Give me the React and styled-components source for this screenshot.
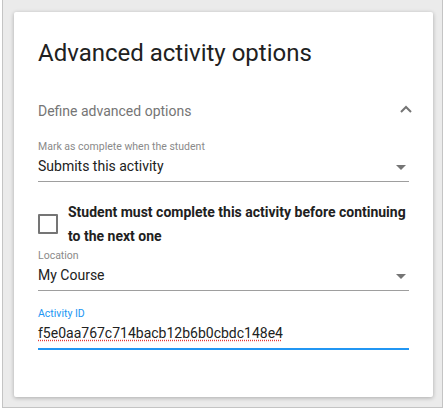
import React from "react";
import styled, { createGlobalStyle } from "styled-components";

const Global = createGlobalStyle`
  html, body {
    margin: 0;
    background: #fff;
    font-family: Roboto, "Liberation Sans", sans-serif;
  }
`;

function App() {
  return (
    <>
      <Global />
      <Frame>
        <Card>
          <Title>Advanced activity options</Title>
          <SectionHeader>
            <SectionTitle>Define advanced options</SectionTitle>
            <Chevron viewBox="0 0 12 8">
              <path d="M1 7 L6 2 L11 7" fill="none" stroke="#757575" strokeWidth="2" />
            </Chevron>
          </SectionHeader>

          <Field>
            <Label>Mark as complete when the student</Label>
            <SelectRow>
              <Value>Submits this activity</Value>
              <Caret />
            </SelectRow>
          </Field>

          <CheckRow>
            <Box />
            <CheckText>
              Student must complete this activity before continuing to the next one
            </CheckText>
          </CheckRow>

          <Field $top={2}>
            <Label>Location</Label>
            <SelectRow>
              <Value>My Course</Value>
              <Caret />
            </SelectRow>
          </Field>

          <Field $top={17}>
            <Label $focused>Activity ID</Label>
            <SelectRow $focused>
              <Value>
                <Misspelled>f5e0aa767c714bacb12b6b0cbdc148e4</Misspelled>
              </Value>
            </SelectRow>
          </Field>
        </Card>
      </Frame>
    </>
  );
}

export default App;

const Frame = styled.div`
  margin: 0 2px 3px 2px;
  padding: 12px 9px 10px 11px;
  background: #ebebeb;
  border: 1px solid #c4c4c4;
  border-top: none;
`;

const Card = styled.div`
  background: #fff;
  height: 385px;
  box-sizing: border-box;
  padding: 23px 24px 0 24px;
  box-shadow: 0 1px 4px rgba(0, 0, 0, 0.28);
  border-radius: 2px;
`;

const Title = styled.h1`
  margin: 0;
  font-size: 24px;
  font-weight: 400;
  line-height: 36px;
  color: #212121;
`;

const SectionHeader = styled.div`
  display: flex;
  align-items: center;
  justify-content: space-between;
  margin-top: 28px;
  height: 24px;
`;

const SectionTitle = styled.span`
  font-size: 14px;
  color: #757575;
`;

const Chevron = styled.svg`
  width: 12px;
  height: 8px;
  margin-right: -3px;
  margin-top: -4px;
`;

const Field = styled.div`
  margin-top: ${(p) => (p.$top ?? 18)}px;
`;

const Label = styled.div`
  font-size: 10.5px;
  line-height: 12px;
  color: ${(p) => (p.$focused ? "#2196f3" : "#8a8a8a")};
`;

const SelectRow = styled.div`
  display: flex;
  align-items: center;
  justify-content: space-between;
  height: 26px;
  padding-bottom: 2px;
  border-bottom: ${(p) => (p.$focused ? "2px solid #2196f3" : "1px solid #9e9e9e")};
`;

const Value = styled.span`
  font-size: 14px;
  color: #212121;
`;

const Misspelled = styled.span`
  text-decoration: underline dotted #e53935;
  text-underline-offset: 2px;
`;

const Caret = styled.span`
  width: 0;
  height: 0;
  margin-right: 3px;
  margin-top: 3px;
  border-left: 5px solid transparent;
  border-right: 5px solid transparent;
  border-top: 5px solid #757575;
`;

const CheckRow = styled.div`
  display: flex;
  align-items: center;
  gap: 10px;
  margin-top: 18px;
`;

const Box = styled.span`
  flex: none;
  width: 16px;
  height: 16px;
  border: 2px solid #757575;
  border-radius: 1px;
`;

const CheckText = styled.div`
  font-size: 14px;
  font-weight: 700;
  line-height: 24px;
  color: #212121;
`;
